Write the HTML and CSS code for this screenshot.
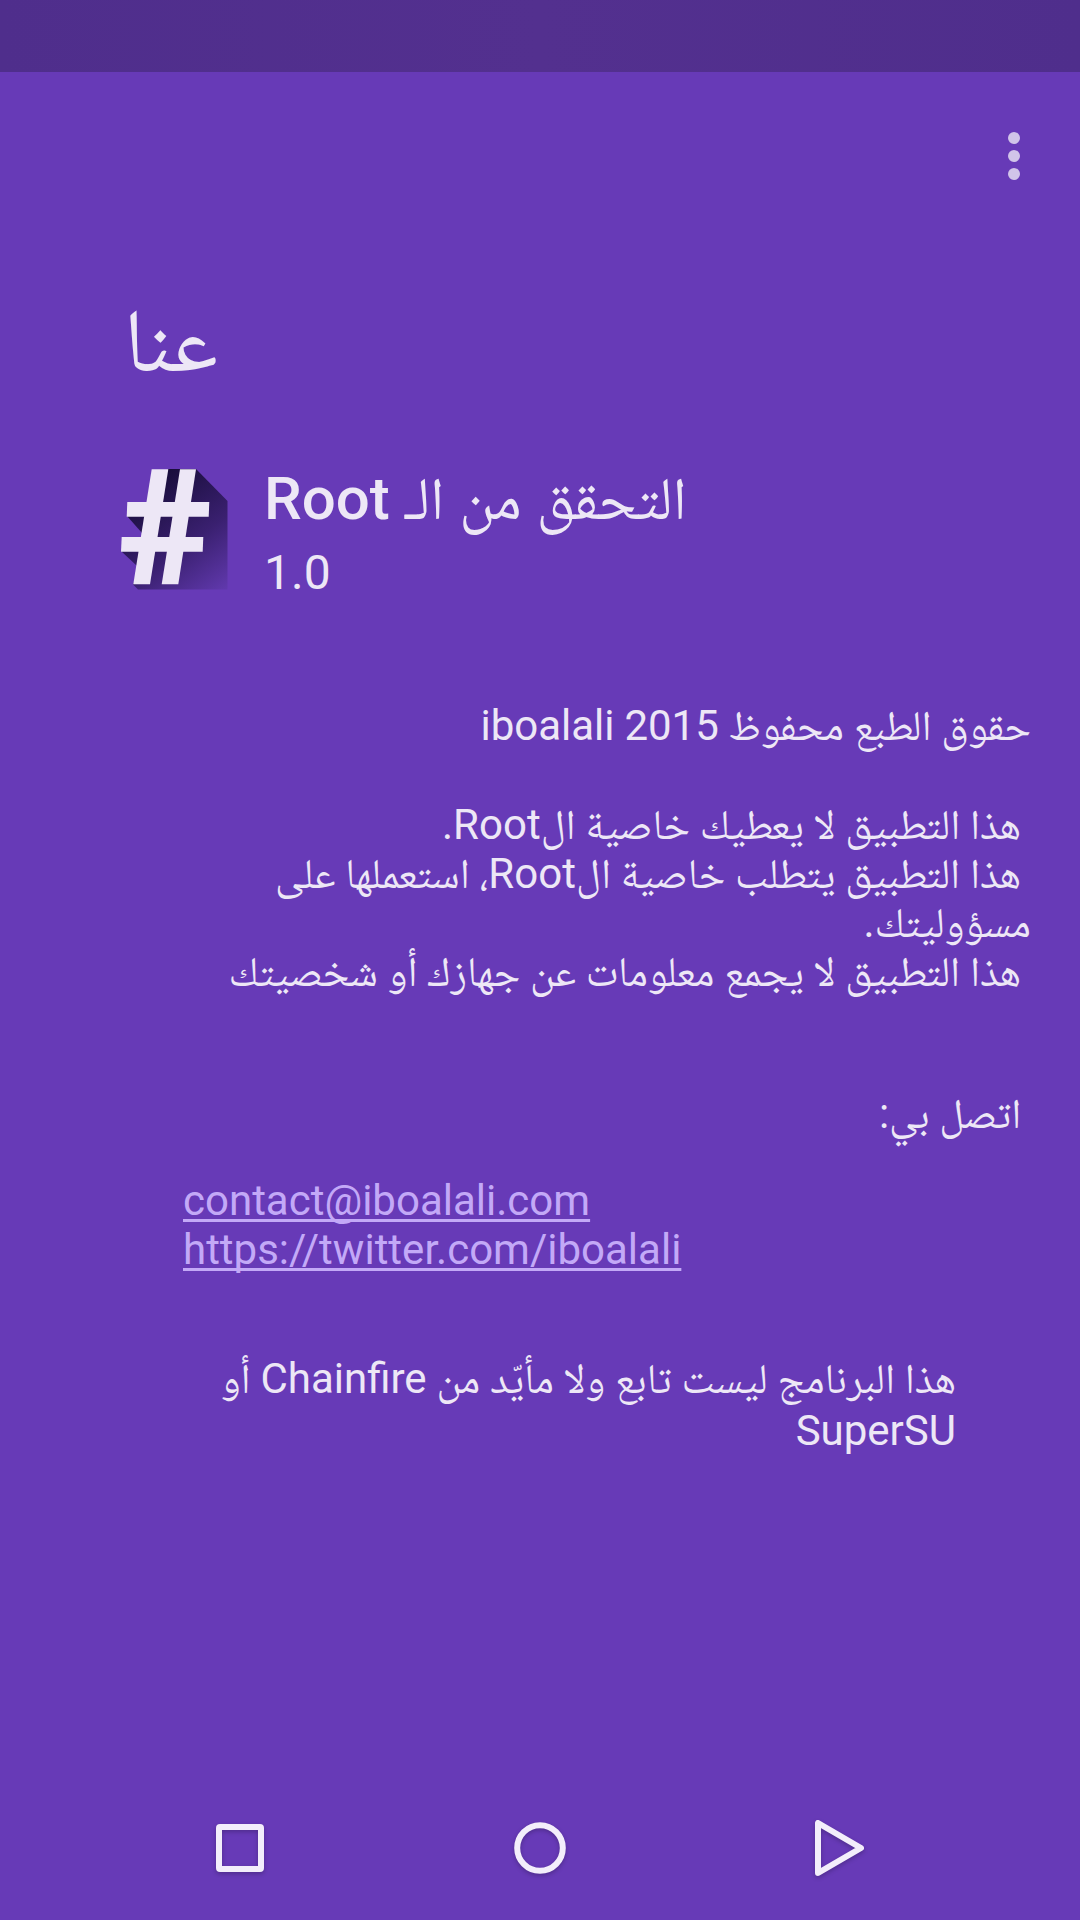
FILE: index.html
```html
<!DOCTYPE html>
<html lang="ar">
<head>
<meta charset="utf-8">
<title>عنا</title>
<link rel="stylesheet" href="styles.css">
</head>
<body>
<div class="screen">
  <div class="statusbar"></div>
  <div class="toolbar">
    <div class="overflow"><span class="dot"></span><span class="dot"></span><span class="dot"></span></div>
  </div>
  <h1 class="title" dir="rtl">عنا</h1>
  <div class="app-head">
    <svg class="app-icon" viewBox="0 0 130 140" aria-hidden="true">
      <defs>
        <linearGradient id="sh" gradientUnits="userSpaceOnUse" x1="40" y1="25" x2="118" y2="133">
          <stop offset="0" stop-color="#180d3a"/>
          <stop offset="0.55" stop-color="#3a2070"/>
          <stop offset="1" stop-color="#6139ae"/>
        </linearGradient>
      </defs>
      <path fill="url(#sh)" d="M58 13H86L117.500 45V133.500H28L23 128.500L58 13Z"/>
      <path fill="url(#sh)" d="M17 60H36L32 77Z"/>
      <path fill="url(#sh)" d="M11 95H31L27 110Z"/>
      <g class="hash">
        <polygon points="41.700,13.300 58.300,13.300 40,128.300 23.300,128.300"/>
        <polygon points="70,13.300 86,13.300 68.300,128.300 51.700,128.300"/>
        <polygon points="17.300,46 99.300,46 98.700,60.700 16.700,60.700"/>
        <polygon points="11.700,81 93.300,81 92.700,95.700 11,95.700"/>
      </g>
    </svg>
    <div class="app-text">
      <div class="app-name"><b class="latin">Root</b> التحقق من الـ</div>
      <div class="app-version">1.0</div>
    </div>
  </div>
  <div class="content">
    <p class="copy" dir="rtl">حقوق الطبع محفوظ 2015 iboalali</p>
    <p class="notes" dir="rtl">&nbsp;هذا التطبيق لا يعطيك خاصية الRoot.<br>&nbsp;هذا التطبيق يتطلب خاصية الRoot، استعملها على مسؤوليتك.<br>&nbsp;هذا التطبيق لا يجمع معلومات عن جهازك أو شخصيتك</p>
    <p class="contact" dir="rtl">&nbsp;اتصل بي:</p>
    <div class="links">
      <a href="#">contact@iboalali.com</a>
      <a href="#">https://twitter.com/iboalali</a>
    </div>
    <p class="disclaimer" dir="rtl">هذا البرنامج ليست تابع ولا مأيّد من Chainfire أو SuperSU</p>
  </div>
  <div class="navbar">
    <svg class="nav-icon" viewBox="0 0 64 64" aria-hidden="true"><rect x="11" y="11" width="42" height="42" rx="1"/></svg>
    <svg class="nav-icon" viewBox="0 0 64 64" aria-hidden="true"><circle cx="32" cy="32" r="22.800"/></svg>
    <svg class="nav-icon" viewBox="0 0 64 64" aria-hidden="true"><path d="M10 7V57L53 32Z"/></svg>
  </div>
</div>
</body>
</html>
```

FILE: styles.css
```css
* { box-sizing: border-box; }
html, body { margin: 0; padding: 0; }
body {
  width: 1080px;
  height: 1920px;
  overflow: hidden;
  background: #673ab7;
  font-family: Roboto, "Noto Naskh Arabic", "Noto Sans Arabic", "DejaVu Sans", sans-serif;
  color: #ede7f6;
}
.screen {
  width: 1080px;
  height: 1920px;
  display: flex;
  flex-direction: column;
  background: #673ab7;
}
.statusbar {
  height: 72px;
  background: linear-gradient(90deg, #4f2e8c, #53308f 50%, #4f2e8c);
}
.toolbar {
  height: 168px;
  display: flex;
  justify-content: flex-end;
  padding: 60px 60px 0 0;
}
.overflow {
  display: flex;
  flex-direction: column;
  gap: 6px;
}
.dot {
  width: 12px;
  height: 12px;
  border-radius: 50%;
  background: #d1c4e9;
}
.title {
  margin: 51px 0 0 118px;
  width: 100px;
  font-size: 90px;
  font-weight: 400;
  line-height: 100px;
}
.app-head {
  margin: 65px 0 0 110px;
  display: flex;
  align-items: flex-start;
}
.app-icon {
  width: 130px;
  height: 140px;
  flex: none;
}
.hash { fill: #ede7f6; }
.app-text { margin: 8px 0 0 24px; }
.app-name {
  font-size: 60px;
  line-height: 70px;
}
.latin { font-weight: 500; }
.app-version {
  font-size: 48px;
  line-height: 56px;
  margin-top: 11px;
}
.content {
  margin: 0 49px 0 120px;
  font-size: 42px;
  line-height: 49px;
  word-spacing: -0.6px;
}
.content p { margin: 0; }
.copy { margin-top: 100px !important; }
.notes { margin-top: 50px !important; }
.contact { margin-top: 93px !important; }
.links {
  margin: 38px 0 0 63px;
  display: flex;
  flex-direction: column;
}
.links a {
  color: #c3a9f7;
  text-decoration: underline;
  text-decoration-skip-ink: none;
  text-decoration-thickness: 3px;
  text-underline-offset: 4px;
  font-size: 42px;
  line-height: 49px;
}
.disclaimer {
  margin: 79px 75px 0 63px !important;
  line-height: 52px;
}
.navbar {
  margin-top: auto;
  height: 144px;
  display: flex;
  justify-content: center;
  align-items: center;
  gap: 236px;
}
.nav-icon {
  width: 64px;
  height: 64px;
  flex: none;
  fill: none;
  stroke: #f3eefb;
  stroke-width: 6;
  stroke-linejoin: round;
  overflow: visible;
  filter: drop-shadow(0 2px 2px rgba(0, 0, 0, 0.22));
}
```
